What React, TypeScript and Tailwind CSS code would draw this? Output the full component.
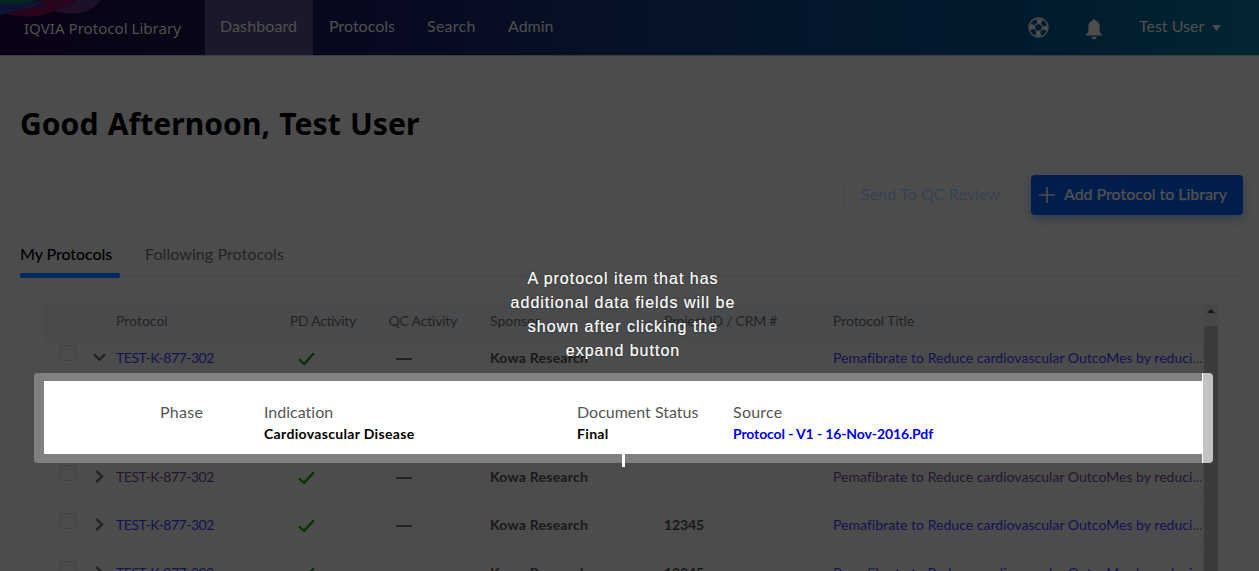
import React from "react";
import clsx from "clsx";

type Row = { id: string; visited?: boolean; open?: boolean; project?: string };

const rows: Row[] = [
  { id: "r2", visited: true },
  { id: "r3", project: "12345" },
  { id: "r4", project: "12345" },
];

function Logo() {
  return (
    <svg className="absolute left-0 top-0" width="104" height="20" viewBox="0 0 104 20">
      <path d="M32 3 C46 10 60 13.500 73 13.500 C86 13.500 94 8 101 0 H40 Z" fill="#1f1029" />
      <path d="M7 14 C20 18 42 18 54 11 C64 6 72 4 78 0 H40 C26 4 18 8 7 14 Z" fill="#28041d" />
      <path d="M0 2 H48 C34 9 12 10 0 16 Z" fill="#0d1434" />
      <path d="M0 0 H38 C24 5 10 3 0 4 Z" fill="#072620" />
    </svg>
  );
}

function LifeRing() {
  return (
    <svg width="21" height="21" viewBox="0 0 21 21" fill="none">
      <circle cx="10.500" cy="10.500" r="9.500" stroke="#4d4d4d" strokeWidth="1.400" />
      <circle cx="10.500" cy="10.500" r="6.200" stroke="#4d4d4d" strokeWidth="4.800" strokeDasharray="4.870 4.870" strokeDashoffset="2.435" />
      <circle cx="10.500" cy="10.500" r="3.900" stroke="#4d4d4d" strokeWidth="1.300" />
    </svg>
  );
}

function Bell() {
  return (
    <svg width="16" height="21" viewBox="0 0 16 21" fill="#4d4d4d">
      <path d="M8 0 C8.900 0 9.200 .6 9.200 1.600 C12.200 2.300 13.700 4.700 13.700 8 V13 L16 15.700 V16.500 H0 V15.700 L2.300 13 V8 C2.300 4.700 3.800 2.300 6.800 1.600 C6.800 .6 7.100 0 8 0 Z" />
      <path d="M5.600 17.800 H10.400 C10.400 19.400 9.400 20.400 8 20.400 S5.600 19.400 5.600 17.800 Z" />
    </svg>
  );
}

function Check() {
  return (
    <svg width="17" height="14" viewBox="0 0 17 14" fill="none" stroke="#052f05" strokeWidth="2.200">
      <path d="M1 7.300 L6.200 12 L15.800 1.200" />
    </svg>
  );
}

function Chevron({ open }: { open?: boolean }) {
  return open ? (
    <svg width="13" height="9" viewBox="0 0 13 9" fill="none" stroke="#222" strokeWidth="2.300">
      <path d="M.9 1.100 L6.500 6.900 L12.100 1.100" />
    </svg>
  ) : (
    <svg width="9" height="13" viewBox="0 0 9 13" fill="none" stroke="#222" strokeWidth="2.300">
      <path d="M1.200 .9 L7 6.500 L1.200 12.100" />
    </svg>
  );
}

function ProtocolRow({ row }: { row: Row }) {
  const link = row.visited ? "text-[#25142f]" : "text-[#121252]";
  return (
    <div
      className={clsx(
        "flex h-12 w-full shrink-0 items-center whitespace-nowrap text-[14px] leading-5",
        !row.open && "border-t border-[#474747] pb-[2px]",
      )}
    >
      <div className="w-[50px] self-start pl-4 pt-[11px]">
        <div className="size-4 rounded-[2px] border border-[#434343]" />
      </div>
      <div className={clsx("w-[22px]", row.open ? "-ml-px mr-px pb-[2px]" : "pl-px")}>
        <Chevron open={row.open} />
      </div>
      <div className={clsx("w-[182px] tracking-[-0.48px]", link)}>TEST-K-877-302</div>
      <div className={clsx("w-[98px]", row.open ? "pt-px" : "pt-[3px]")}><Check /></div>
      <div className="w-[94px] pt-[2px]"><div className="h-[2px] w-4 bg-[#222]" /></div>
      <div className="w-[174px] font-bold tracking-[0.23px] text-[#191919]">Kowa Research</div>
      <div className="w-[169px] font-bold tracking-[-0.1px] text-[#191919]">{row.project}</div>
      <div className={clsx("tracking-[0.03px]", link)}>
        Pemafibrate to Reduce cardiovascular OutcoMes by reduci<span className="text-[#2b2b2b]">...</span>
      </div>
    </div>
  );
}

function Field({ label, value, width, link }: { label: string; value?: string; width: string; link?: boolean }) {
  return (
    <div className={width}>
      <div className="h-[22px] text-[16px] leading-[21px] text-[#555]">{label}</div>
      <div className={clsx("h-[22px] text-[14px] font-bold leading-[22px]", link ? "tracking-[-0.12px] text-[#0000ee]" : "tracking-[0.33px] text-black")}>
        {value}
      </div>
    </div>
  );
}

export default function App() {
  return (
    <div className="relative h-[571px] w-[1259px] overflow-hidden bg-[#4c4c4c] font-['Lato',sans-serif] [font-variant-ligatures:none]">
      <nav className="relative flex h-[56px] border-b border-[#383c43] bg-[linear-gradient(90deg,#0a0015_0%,#080617_12%,#070920_30%,#061126_48%,#04162b_64%,#021a2d_82%,#022531_100%)] text-[16px] leading-[52px] text-[#505050]">
        <Logo />
        <div className="relative w-[205px] pl-6 pt-[2px] font-['Noto_Sans',sans-serif] text-[15.1px]">IQVIA Protocol Library</div>
        <div className="w-[108px] bg-[#1a182a] pl-[15px] tracking-[0.1px]">Dashboard</div>
        <div className="w-[98px] pl-4">Protocols</div>
        <div className="w-[81px] pl-4 tracking-[0.25px]">Search</div>
        <div className="w-[77px] pl-4">Admin</div>
        <div className="ml-auto flex h-[54px] items-center">
          <LifeRing />
          <div className="ml-[37px] mt-[4px]"><Bell /></div>
          <div className="-mt-0.5 ml-[37px] w-[65px] whitespace-nowrap">Test User</div>
          <svg className="ml-2 mr-[38px] mt-px" width="9" height="6" viewBox="0 0 9 6" fill="#4d4d4d"><path d="M0 0 H9 L4.500 6 Z" /></svg>
        </div>
      </nav>

      <h1 className="ml-5 mt-[47px] h-[42px] whitespace-nowrap font-['Noto_Sans',sans-serif] text-[30.1px] font-bold leading-[42px] text-black [word-spacing:1.500px]">
        Good Afternoon, Test User
      </h1>

      <div className="mr-4 mt-[30px] flex justify-end gap-[13px] text-[16px] leading-[38px]">
        <div className="h-10 w-[174px] rounded border border-[#484848] pl-4 leading-[36px] tracking-[0.08px] text-[#364154]">Send To QC Review</div>
        <div className="flex h-10 w-[212px] whitespace-nowrap rounded bg-[#001d4c] pl-2 font-medium tracking-[-0.05px] text-[#505050] shadow-[0_4px_8px_#323d50] [-webkit-text-stroke:0.25px_#505050]">
          <svg className="mr-[9px] mt-[12px]" width="16" height="16" viewBox="0 0 16 16" stroke="#4d4d4d" strokeWidth="1.600"><path d="M8 0 V16 M0 8 H16" /></svg>
          Add Protocol to Library
        </div>
      </div>

      <div className="ml-5 mr-4 mt-[20px] flex h-[43px] text-[16px] leading-[38px]">
        <div className="flex w-[100px] flex-col justify-between whitespace-nowrap font-medium tracking-[-0.07px] text-black">
          <span>My Protocols</span>
          <div className="h-[5px] rounded-[2px] bg-[#00275f]" />
        </div>
        <div className="flex flex-1 flex-col pl-[25px] tracking-[0.07px] text-[#242424]">
          <span className="h-[41px]">Following Protocols</span>
          <div className="-ml-[25px] h-px bg-[#454545]" />
        </div>
      </div>

      <div className="ml-[44px] mt-[25px] flex h-[268px]">
        <div className="flex w-[1159px] flex-col">
          <div className="flex h-[39px] shrink-0 whitespace-nowrap bg-[#494a4c] pl-[72px] text-[14px] leading-9 text-[#242424]">
            <div className="w-[174px]">Protocol</div>
            <div className="w-[98.5px] tracking-[-0.32px]">PD Activity</div>
            <div className="w-[101.5px] tracking-[-0.2px]">QC Activity</div>
            <div className="w-[174px]">Sponsor</div>
            <div className="w-[169px] tracking-[-0.27px]">Project ID / CRM #</div>
            <div className="tracking-[-0.08px]">Protocol Title</div>
          </div>
          <div className="h-[39px] shrink-0 overflow-hidden">
            <div className="-mt-2"><ProtocolRow row={{ id: "r1", open: true }} /></div>
          </div>
          <div className="relative flex h-[72px] shrink-0 bg-white pl-[116px] pt-[20px]">
            <Field width="w-[104px] tracking-[0.3px]" label="Phase" />
            <Field width="w-[313px]" label="Indication" value="Cardiovascular Disease" />
            <Field width="w-[156px]" label="Document Status" value="Final" />
            <Field width="w-[300px] tracking-[0.25px]" label="Source" value="Protocol - V1 - 16-Nov-2016.Pdf" link />
            <div className="absolute left-0 top-[72px] h-px w-[1159px] bg-white" />
            <div className="absolute -left-[10px] -top-2 h-[90px] w-[1170px] rounded-l border-y-8 border-l-[10px] border-[#808080] border-b-[9px]" />
            <div className="absolute -top-2 left-[1159px] h-[90px] w-[10px] rounded-r bg-[#c3c3c3]" />
            <div className="absolute -top-2 left-[1158px] h-[90px] w-px bg-white" />
            <div className="absolute left-[578px] top-[73px] h-[13px] w-[2.500px] bg-white" />
          </div>
          {rows.map((r) => <ProtocolRow key={r.id} row={r} />)}
        </div>
        <div className="w-[15px] bg-[#484848]">
          <div className="flex h-[23px] justify-center pt-[6px]">
            <svg width="8" height="4" viewBox="0 0 8 4" fill="#151515"><path d="M4 0 L8 4 H0 Z" /></svg>
          </div>
          <div className="mx-auto h-[245px] w-[14px] bg-[#3b3b3b]" />
        </div>
      </div>

      <div className="absolute left-[502px] top-[267px] w-[242px] text-center font-['Liberation_Sans',sans-serif] text-[16px] leading-6 tracking-[1px] text-white [-webkit-text-stroke:0.2px_#fff] [text-shadow:0_0_2px_#222]">
        A protocol item that has<br />additional data fields will be<br />shown after clicking the<br />expand button
      </div>
    </div>
  );
}
